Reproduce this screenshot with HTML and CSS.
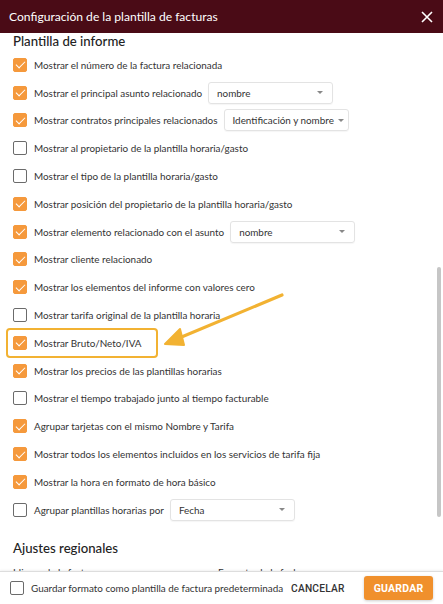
FILE: index.html
```html
<!DOCTYPE html>
<html lang="es">
<head>
<meta charset="utf-8">
<title>Configuración de la plantilla de facturas</title>
<link rel="stylesheet" href="styles.css">
</head>
<body>
<div class="dialog">
  <header class="dlg-header">
    <span class="dlg-title">Configuración de la plantilla de facturas</span>
    <svg class="close" width="12" height="12" viewBox="0 0 12 12"><path d="M1 1L11 11M11 1L1 11" stroke="#fff" stroke-width="1.6" fill="none"/></svg>
  </header>
  <main class="dlg-body">
    <h2 class="section-title">Plantilla de informe</h2>
    <div class="row"><span class="cb on"></span><span class="lbl">Mostrar el número de la factura relacionada</span></div>
    <div class="row"><span class="cb on"></span><span class="lbl">Mostrar el principal asunto relacionado</span><span class="select">nombre<i class="caret"></i></span></div>
    <div class="row"><span class="cb on"></span><span class="lbl">Mostrar contratos principales relacionados</span><span class="select">Identificación y nombre<i class="caret"></i></span></div>
    <div class="row"><span class="cb"></span><span class="lbl">Mostrar al propietario de la plantilla horaria/gasto</span></div>
    <div class="row"><span class="cb"></span><span class="lbl">Mostrar el tipo de la plantilla horaria/gasto</span></div>
    <div class="row"><span class="cb on"></span><span class="lbl">Mostrar posición del propietario de la plantilla horaria/gasto</span></div>
    <div class="row"><span class="cb on"></span><span class="lbl">Mostrar elemento relacionado con el asunto</span><span class="select">nombre<i class="caret"></i></span></div>
    <div class="row"><span class="cb on"></span><span class="lbl">Mostrar cliente relacionado</span></div>
    <div class="row"><span class="cb on"></span><span class="lbl">Mostrar los elementos del informe con valores cero</span></div>
    <div class="row"><span class="cb"></span><span class="lbl">Mostrar tarifa original de la plantilla horaria</span></div>
    <div class="row"><span class="cb on"></span><span class="lbl">Mostrar Bruto/Neto/IVA</span></div>
    <div class="row"><span class="cb on"></span><span class="lbl">Mostrar los precios de las plantillas horarias</span></div>
    <div class="row"><span class="cb"></span><span class="lbl">Mostrar el tiempo trabajado junto al tiempo facturable</span></div>
    <div class="row"><span class="cb on"></span><span class="lbl">Agrupar tarjetas con el mismo Nombre y Tarifa</span></div>
    <div class="row"><span class="cb on"></span><span class="lbl">Mostrar todos los elementos incluidos en los servicios de tarifa fija</span></div>
    <div class="row"><span class="cb on"></span><span class="lbl">Mostrar la hora en formato de hora básico</span></div>
    <div class="row"><span class="cb"></span><span class="lbl">Agrupar plantillas horarias por</span><span class="select">Fecha<i class="caret"></i></span></div>
    <h2 class="section-title second">Ajustes regionales</h2>
    <div class="fields">
      <span class="field-lbl">Idioma de la factura</span>
      <span class="field-lbl">Formato de la fecha</span>
    </div>
    <div class="highlight"></div>
    <svg class="arrow" width="130" height="60" viewBox="0 0 130 60">
      <path d="M122 4L12 50" stroke="#f2b232" stroke-width="3.2" stroke-linecap="round" fill="none"/>
      <path d="M5 53L20 38L24 54Z" fill="#f2b232" stroke="#f2b232" stroke-width="2" stroke-linejoin="round"/>
    </svg>
    <div class="scroll-thumb"></div>
  </main>
  <footer class="dlg-footer">
    <span class="cb"></span>
    <span class="foot-lbl">Guardar formato como plantilla de factura predeterminada</span>
    <span class="btn-text">CANCELAR</span>
    <span class="btn-primary">GUARDAR</span>
  </footer>
</div>
</body>
</html>
```
FILE: styles.css
```css
* { box-sizing: border-box; }
html, body { margin: 0; padding: 0; background: #fff; }
body { font-family: Lato, "Noto Sans", sans-serif; color: #333; }

.dialog {
  width: 443px;
  height: 604px;
  display: flex;
  flex-direction: column;
  overflow: hidden;
}

.dlg-header {
  height: 33px;
  flex: 0 0 33px;
  background: #4a0b16;
  display: flex;
  align-items: center;
  justify-content: space-between;
  padding: 0 10px 0 9px;
  color: #fff;
}
.dlg-title { font-size: 12.1px; }
.close { margin-top: 1px; }

.dlg-body {
  position: relative;
  flex: 1 1 auto;
  overflow: hidden;
  padding: 0 0 0 13px;
}

.section-title {
  margin: 0 0 1px 0;
  height: 17px;
  line-height: 16px;
  font-size: 13.2px;
  font-weight: 500;
  color: #222;
}
.section-title.second { margin-top: 14px; height: 20px; line-height: 20px; }

.row {
  height: 27.8px;
  display: flex;
  align-items: center;
  font-size: 9.9px;
  color: #333;
}
.row:first-of-type { margin-top: 1px; }
.lbl { margin-left: 7px; white-space: nowrap; }

.cb {
  flex: 0 0 14px;
  width: 14px;
  height: 14px;
  border: 1.4px solid #6b6b6b;
  border-radius: 2px;
  background: #fff;
  position: relative;
}
.cb.on { background: #f5993c; border-color: #f5993c; }
.cb.on::after {
  content: "";
  position: absolute;
  left: 3.5px;
  top: 0.5px;
  width: 4px;
  height: 8px;
  border-right: 1.3px solid #fff;
  border-bottom: 1.3px solid #fff;
  transform: rotate(45deg);
}

.select {
  margin-left: 6px;
  width: 125px;
  height: 22px;
  border: 1px solid #e3e3e3;
  border-radius: 3px;
  display: flex;
  align-items: center;
  justify-content: space-between;
  padding: 0 9px 0 8px;
  font-size: 9.9px;
  color: #333;
  white-space: nowrap;
  box-shadow: 0 1px 1px rgba(0,0,0,0.04);
}
.caret {
  width: 0; height: 0;
  border-left: 3px solid transparent;
  border-right: 3px solid transparent;
  border-top: 3px solid #888;
  margin-left: 4px;
}

.fields {
  display: flex;
  margin-top: 8px;
  font-size: 9.9px;
  color: #333;
}
.field-lbl:first-child { width: 205px; }

.highlight {
  position: absolute;
  left: 6px;
  top: 295px;
  width: 152px;
  height: 30px;
  border: 2px solid #f2b232;
  border-radius: 4px;
}
.arrow {
  position: absolute;
  left: 160px;
  top: 258px;
}
.scroll-thumb {
  position: absolute;
  right: 2px;
  top: 234px;
  width: 4px;
  height: 250px;
  border-radius: 3px;
  background: #c6c6c6;
}

.dlg-footer {
  flex: 0 0 33px;
  height: 33px;
  border-top: 1px solid #ddd;
  box-shadow: 0 -1px 2px rgba(0,0,0,0.06);
  display: flex;
  align-items: center;
  padding: 0 10px 0 10px;
  position: relative;
  background: #fff;
}
.foot-lbl { margin-left: 7px; font-size: 9.9px; color: #333; white-space: nowrap; }
.btn-text {
  margin-left: 8px;
  font-family: Roboto, sans-serif;
  font-weight: 500;
  font-size: 10.2px;
  color: #333;
  letter-spacing: 0.2px;
}
.btn-primary {
  margin-left: auto;
  width: 69px;
  height: 24px;
  background: #f0902c;
  border-radius: 3px;
  color: #fff;
  font-family: Roboto, sans-serif;
  font-weight: 700;
  font-size: 10.5px;
  letter-spacing: 0.2px;
  display: flex;
  align-items: center;
  justify-content: center;
  box-shadow: 0 1px 3px rgba(0,0,0,0.2);
}
```
